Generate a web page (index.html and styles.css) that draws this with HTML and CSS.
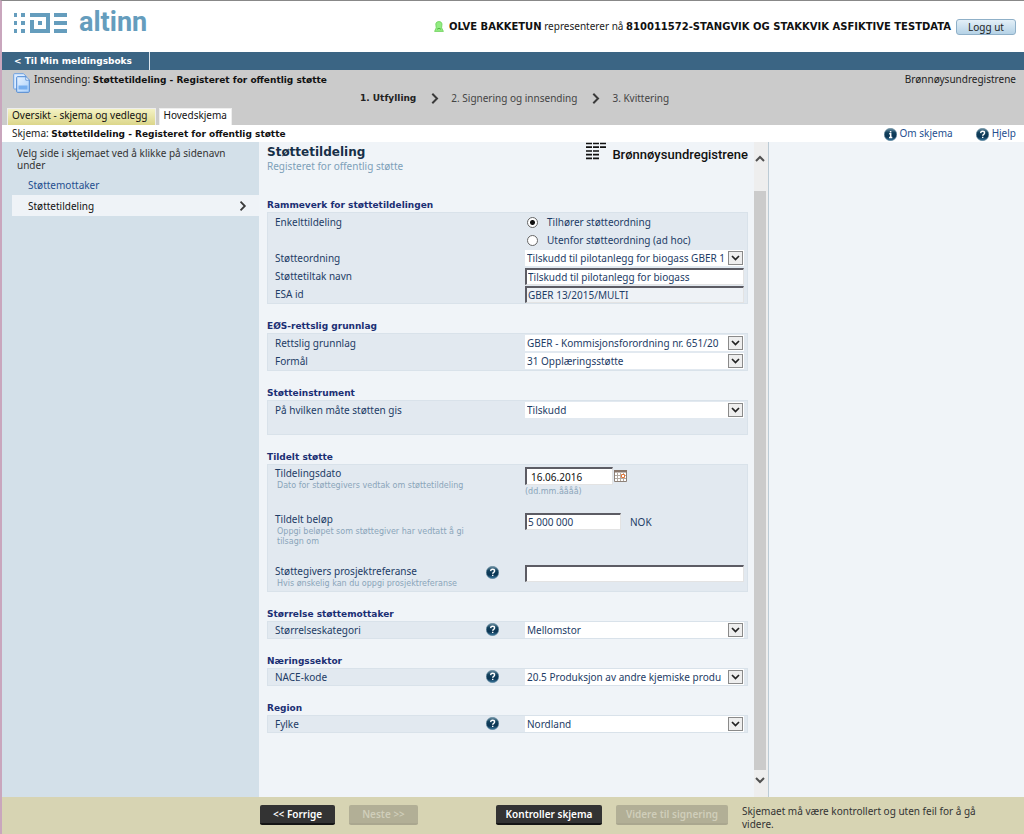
FILE: index.html
```html
<!DOCTYPE html>
<html lang="no">
<head>
<meta charset="utf-8">
<title>Altinn - Støttetildeling</title>
<link rel="stylesheet" href="styles.css">
</head>
<body>
<svg class="defs" aria-hidden="true">
  <defs>
    <linearGradient id="orb" x1="0" y1="0" x2="0" y2="1"><stop offset="0" stop-color="#6f93a6"/><stop offset=".35" stop-color="#12405c"/><stop offset=".7" stop-color="#0b3554"/><stop offset="1" stop-color="#3f7fa5"/></linearGradient>
    <linearGradient id="sheet" x1="0" y1="0" x2="1" y2="1"><stop offset="0" stop-color="#e8f3ff"/><stop offset="1" stop-color="#a9d0fb"/></linearGradient>
    <symbol id="help" viewBox="0 0 13 13"><circle cx="6.5" cy="6.5" r="6.2" fill="url(#orb)" stroke="#5e8398" stroke-width=".6"/><path d="M4.6 5.1C4.7 3.9 5.5 3.3 6.6 3.3c1.200 0 2 .6 2 1.600 0 1.500-1.900 1.500-1.900 2.900M6.700 8.700v1.300" fill="none" stroke="#fff" stroke-width="1.400"/></symbol>
    <symbol id="info" viewBox="0 0 13 13"><circle cx="6.5" cy="6.5" r="6.2" fill="url(#orb)" stroke="#5e8398" stroke-width=".6"/><path d="M6.600 2.900v1.500M5.200 5.800h1.500v3.700M5 9.600h3.300" fill="none" stroke="#fff" stroke-width="1.500"/></symbol>
    <symbol id="drop" viewBox="0 0 15 14"><rect x=".5" y=".5" width="14" height="13" fill="#eee" stroke="#8a8a8a"/><path d="M4 5l3.500 3.500L11 5" fill="none" stroke="#222" stroke-width="1.700"/></symbol>
    <symbol id="next" viewBox="0 0 8 11"><path d="M1.300.8L6 5.500 1.300 10.200" fill="none" stroke="#3a3a3a" stroke-width="2"/></symbol>
  </defs>
</svg>
<div class="page">
  <header class="top">
    <div class="logo">
      <svg width="54" height="21" viewBox="0 0 54 21" fill="#659dbd" aria-hidden="true">
        <path d="M1 1h3v4H1zM8 1h4v4H8zM1 9h3v4H1zM8 9h4v4H8zM1 17h3v4H1zM8 17h4v4H8zM17 1h20v16h-4V5H17zM17 8h4v9h16v4H17zM25 9h4v4h-4zM41 1h13v4H41zM41 9h13v4H41zM41 17h13v4H41z"/>
      </svg>
      <span class="logo-text">altinn</span>
    </div>
    <div class="user">
      <svg width="10" height="11" viewBox="0 0 10 11" aria-hidden="true"><path d="M.6 10.400L2.200 6.800 1.800 3C2 1.300 3.300.6 5 .6s2.800.8 3 2.500L7.600 6.800l1.800 3.600z" fill="#93ec83" stroke="#68cf55" stroke-width=".8"/><path d="M3 8.500c1-1.500 3-1.500 4 0" fill="none" stroke="#56b845"/></svg>
      <span><b>OLVE BAKKETUN</b> representerer nå <b>810011572-STANGVIK OG STAKKVIK ASFIKTIVE TESTDATA</b></span>
      <button class="logout" type="button">Logg ut</button>
    </div>
  </header>
  <nav class="bar"><a href="#">&lt; Til Min meldingsboks</a></nav>
  <div class="task">
    <div class="task-head">
      <svg width="17" height="20" viewBox="0 0 17 20" aria-hidden="true"><path d="M.7 1.500q0-.8.8-.8h9l3 3V16H1.500q-.8 0-.8-.8z" fill="#dcecff" stroke="#6b9fe0"/><path d="M3.700 4.500q0-.8.8-.8h8.500l3.300 3.300v11.500q0 .8-.8.8h-11q-.8 0-.8-.8z" fill="url(#sheet)" stroke="#4b87d3"/><path d="M12.800 4v3.200h3.300" fill="#fff" stroke="#4b87d3" stroke-width=".8"/><path d="M5.500 12.500h9v4h-9z" fill="#76aff0"/></svg>
      <span class="task-title">Innsending: <b>Støttetildeling - Registeret for offentlig støtte</b></span>
      <span class="org">Brønnøysundregistrene</span>
    </div>
    <ol class="steps">
      <li class="current">1. Utfylling</li>
      <li><svg width="8" height="11"><use href="#next"/></svg>2. Signering og innsending</li>
      <li><svg width="8" height="11"><use href="#next"/></svg>3. Kvittering</li>
    </ol>
    <nav class="tabs">
      <a class="tab overview" href="#">Oversikt - skjema og vedlegg</a>
      <a class="tab active" href="#">Hovedskjema</a>
    </nav>
  </div>
  <div class="formbar">
    <span>Skjema: <b>Støttetildeling - Registeret for offentlig støtte</b></span>
    <nav class="links">
      <a href="#"><svg width="13" height="13"><use href="#info"/></svg><span>Om skjema</span></a>
      <a href="#"><svg width="13" height="13"><use href="#help"/></svg><span>Hjelp</span></a>
    </nav>
  </div>
  <div class="main">
    <aside class="side">
      <p>Velg side i skjemaet ved å klikke på sidenavn under</p>
      <a class="side-link" href="#">Støttemottaker</a>
      <a class="side-link selected" href="#">Støttetildeling <svg width="8" height="10" viewBox="0 0 8 11"><use href="#next"/></svg></a>
    </aside>
    <form class="form">
      <div class="form-head">
        <div class="form-title">
          <h1>Støttetildeling</h1>
          <p>Registeret for offentlig støtte</p>
        </div>
        <div class="brreg">
          <svg width="21" height="18" viewBox="0 0 21 18" aria-hidden="true"><path d="M0 1.500h6M7 1.500h6M14 1.500h6M0 5.200h6M7 5.200h6M14 5.200h6M0 9h6M7 9h6M0 12.700h6M7 12.700h6M0 16.400h6M7 16.400h6" stroke="#111" stroke-width="1.700"/></svg>
          <span>Brønnøysundregistrene</span>
        </div>
      </div>

      <section>
        <h2>Rammeverk for støttetildelingen</h2>
        <div class="box">
          <div class="row" role="radiogroup" aria-labelledby="enk">
            <span class="name" id="enk">Enkelttildeling</span>
            <div class="field radios">
              <label><input type="radio" name="type" checked>Tilhører støtteordning</label>
              <label><input type="radio" name="type">Utenfor støtteordning (ad hoc)</label>
            </div>
          </div>
          <div class="row"><label class="name" for="ordning">Støtteordning</label><div class="field pick"><select id="ordning"><option>Tilskudd til pilotanlegg for biogass GBER 1</option></select><svg width="15" height="14"><use href="#drop"/></svg></div></div>
          <div class="row"><label class="name" for="tiltak">Støttetiltak navn</label><div class="field"><input class="text" id="tiltak" type="text" value="Tilskudd til pilotanlegg for biogass"></div></div>
          <div class="row"><label class="name" for="esa">ESA id</label><div class="field"><input class="text locked" id="esa" type="text" value="GBER 13/2015/MULTI" readonly></div></div>
        </div>
      </section>

      <section>
        <h2>EØS-rettslig grunnlag</h2>
        <div class="box">
          <div class="row"><label class="name" for="rett">Rettslig grunnlag</label><div class="field pick"><select id="rett"><option>GBER - Kommisjonsforordning nr. 651/20</option></select><svg width="15" height="14"><use href="#drop"/></svg></div></div>
          <div class="row"><label class="name" for="formal">Formål</label><div class="field pick"><select id="formal"><option>31 Opplæringsstøtte</option></select><svg width="15" height="14"><use href="#drop"/></svg></div></div>
        </div>
      </section>

      <section>
        <h2>Støtteinstrument</h2>
        <div class="box roomy">
          <div class="row"><label class="name" for="mate">På hvilken måte støtten gis</label><div class="field pick"><select id="mate"><option>Tilskudd</option></select><svg width="15" height="14"><use href="#drop"/></svg></div></div>
        </div>
      </section>

      <section>
        <h2>Tildelt støtte</h2>
        <div class="box amounts">
          <div class="row">
            <div class="name"><label for="dato">Tildelingsdato</label><small>Dato for støttegivers vedtak om støttetildeling</small></div>
            <div class="field">
              <div class="inline"><input class="text date" id="dato" type="text" value="16.06.2016">
              <svg width="13" height="12" viewBox="0 0 13 12" aria-hidden="true"><path d="M.5.5h12v11H.5z" fill="#fff" stroke="#8d8178"/><path d="M0 0h13v2.500H0z" fill="#87756a"/><path d="M1 5.500h11M1 8.500h11M3.500 3v8M6.500 3v8M9.500 3v8" stroke="#b3aaa2"/><path d="M7.500 4.500h3v3h-3z" fill="#fff" stroke="#e0763a"/></svg></div>
              <small class="hint">(dd.mm.åååå)</small>
            </div>
          </div>
          <div class="row">
            <div class="name"><label for="belop">Tildelt beløp</label><small>Oppgi beløpet som støttegiver har vedtatt å gi tilsagn om</small></div>
            <div class="field"><div class="inline"><input class="text amount" id="belop" type="text" value="5 000 000"><span class="unit">NOK</span></div></div>
          </div>
          <div class="row">
            <div class="name"><label for="ref">Støttegivers prosjektreferanse</label><small>Hvis ønskelig kan du oppgi prosjektreferanse</small></div>
            <button class="q" type="button" aria-label="Hjelp"><svg width="13" height="13"><use href="#help"/></svg></button>
            <div class="field"><input class="text" id="ref" type="text"></div>
          </div>
        </div>
      </section>

      <section>
        <h2>Størrelse støttemottaker</h2>
        <div class="box flush">
          <div class="row"><label class="name" for="kat">Størrelseskategori</label><button class="q" type="button" aria-label="Hjelp"><svg width="13" height="13"><use href="#help"/></svg></button><div class="field pick"><select id="kat"><option>Mellomstor</option></select><svg width="15" height="14"><use href="#drop"/></svg></div></div>
        </div>
      </section>

      <section>
        <h2>Næringssektor</h2>
        <div class="box flush">
          <div class="row"><label class="name" for="nace">NACE-kode</label><button class="q" type="button" aria-label="Hjelp"><svg width="13" height="13"><use href="#help"/></svg></button><div class="field pick"><select id="nace"><option>20.5 Produksjon av andre kjemiske produ</option></select><svg width="15" height="14"><use href="#drop"/></svg></div></div>
        </div>
      </section>

      <section>
        <h2>Region</h2>
        <div class="box flush">
          <div class="row"><label class="name" for="fylke">Fylke</label><button class="q" type="button" aria-label="Hjelp"><svg width="13" height="13"><use href="#help"/></svg></button><div class="field pick"><select id="fylke"><option>Nordland</option></select><svg width="15" height="14"><use href="#drop"/></svg></div></div>
        </div>
      </section>
    </form>
    <div class="scroll" aria-hidden="true">
      <svg width="10" height="7" viewBox="0 0 10 7"><path d="M1 6l4-4 4 4" fill="none" stroke="#505050" stroke-width="2"/></svg>
      <div class="thumb"></div>
      <svg width="10" height="7" viewBox="0 0 10 7"><path d="M1 1l4 4 4-4" fill="none" stroke="#505050" stroke-width="2"/></svg>
    </div>
    <div class="rest"></div>
  </div>
  <footer class="foot">
    <button type="button">&lt;&lt; Forrige</button>
    <button type="button" disabled>Neste &gt;&gt;</button>
    <button class="check" type="button">Kontroller skjema</button>
    <button type="button" disabled>Videre til signering</button>
    <p>Skjemaet må være kontrollert og uten feil for å gå videre.</p>
  </footer>
</div>
</body>
</html>
```
FILE: styles.css
```css
* { box-sizing: border-box; }
body, h1, h2, p, ol { margin: 0; padding: 0; }
body {
  font: 10px/12px "Noto Sans", "DejaVu Sans", sans-serif;
  color: #222;
  background: #f0f4f8;
}
b, h1, h2, .current, .bar a { font-family: "DejaVu Sans", sans-serif; font-weight: bold; }
b, h2, .current, .bar a { font-size: 9px; }
b { color: #111; }
a { color: #1f4f8f; text-decoration: none; }
button, input, select { font: inherit; }
svg { display: block; flex: none; }
.defs { position: absolute; width: 0; height: 0; }

.page {
  min-height: 100vh;
  display: flex;
  flex-direction: column;
  border-top: 1px solid #888;
  border-left: 2px solid #c9a6bd;
}

.top {
  height: 51px;
  display: flex;
  justify-content: space-between;
  padding: 8px 8px 0 11px;
  background: #fff;
}
.logo { display: flex; align-items: center; gap: 12px; height: 27px; }
.logo-text {
  font: bold 27px/27px Roboto, sans-serif;
  color: #659dbd;
}
.user { display: flex; align-items: center; gap: 5px; height: 35px; }
.user b { font-size: 10px; }
.logout {
  height: 16px;
  width: 60px;
  padding: 0;
  border: 1px solid #8fb0c8;
  border-radius: 3px;
  background: linear-gradient(#e4f0f8, #b5d2e6);
  color: #222;
}

.bar { display: flex; height: 18px; background: #3b6584; }
.bar a {
  line-height: 18px;
  padding: 0 17px 0 12px;
  border-right: 1px solid #dce6ee;
  color: #fff;
}

.task { background: #cbcbcb; }
.task-head {
  display: flex;
  height: 20px;
  padding: 3px 8px 0 11px;
  gap: 4px;
}
.org { margin-left: auto; }
.steps {
  display: flex;
  height: 18px;
  align-items: center;
  gap: 15px;
  padding: 0 0 2px 358px;
  list-style: none;
  color: #444;
}
.steps li { display: flex; align-items: center; gap: 12px; }
.steps .current { color: #222; }
.tabs { display: flex; gap: 3px; padding-left: 5px; }
.tab {
  height: 17px;
  line-height: 13px;
  padding: 0 4px;
  border: 1px solid #eee;
  border-bottom: 0;
  color: #111;
}
.overview { padding-right: 7px; background: linear-gradient(#f4f2c4, #dcd68a); }
.active { background: #fff; }

.formbar {
  display: flex;
  justify-content: space-between;
  height: 17px;
  padding: 2px 8px 0 10px;
  background: #fff;
}
.links { display: flex; gap: 23px; }
.links a { display: flex; gap: 3px; }
.links svg { margin-top: 1px; }

.main {
  flex: 1;
  display: grid;
  grid-template-columns: 257px 495px 14px minmax(0, 1fr);
}
.side { background: #d3e0e9; }
.side p { padding: 5px 20px 3px 15px; color: #333; }
.side-link {
  display: flex;
  align-items: center;
  justify-content: space-between;
  height: 21px;
  margin-left: 10px;
  padding: 0 12px 0 16px;
}
.selected { background: #eff3f7; color: #111; }

.form { padding: 0 6px 0 8px; color: #1d3c66; }
.form-head {
  display: flex;
  justify-content: space-between;
  height: 56px;
}
.form-title { padding-top: 2px; }
h1 { font-size: 12px; line-height: 16px; color: #173048; }
.form-head p { color: #7da0b8; }
.brreg { display: flex; gap: 5px; height: 18px; }
.brreg span { font: 500 13px/26px Roboto, sans-serif; color: #111; }
section { margin-bottom: 15px; }
h2 { line-height: 14px; color: #1b2f74; }
.box {
  padding: 1px 4px 1px 8px;
  background: #e2e9f0;
  box-shadow: inset 0 0 0 1px #d9e2ea;
}
.roomy { padding-bottom: 16px; }
.flush { padding-top: 0; padding-bottom: 0; }
.row {
  display: grid;
  grid-template-columns: minmax(0, 1fr) 39px 219px;
  min-height: 18px;
}
.name { grid-column: 1; line-height: 18px; }
.q { grid-column: 2; padding: 2px 0 0; border: 0; background: none; height: 15px; width: 13px; }
.field { grid-column: 3; padding-top: 1px; }
.radios { padding: 0; }
.radios label { display: flex; align-items: center; gap: 9px; height: 18px; }
.radios input {
  appearance: none;
  width: 11px;
  height: 11px;
  margin: 0 0 0 2px;
  border: 1px solid #666;
  border-radius: 50%;
  background: #fff;
}
.radios input:checked { background: radial-gradient(#111 0 2px, #fff 3px); }
.pick { position: relative; }
.pick select {
  display: block;
  appearance: none;
  width: 100%;
  height: 16px;
  padding: 0 16px 0 2px;
  border: 0;
  border-radius: 0;
  background: #fff;
  color: #1d3c66;
  line-height: 16px;
}
.pick svg { position: absolute; right: 1px; top: 2px; }
.text {
  display: block;
  width: 100%;
  height: 17px;
  padding: 0 1px;
  border: 1px solid #e3e3e3;
  border-top: 2px solid #5c5c64;
  border-left: 2px solid #5c5c64;
  background: #fff;
  color: #1d3c66;
  line-height: 14px;
}
.locked { background: #eef2f6; }
.amounts { padding-top: 0; padding-bottom: 0; }
.amounts .row:nth-child(1) { height: 48px; padding-top: 2px; }
.amounts .row:nth-child(2) { height: 52px; }
.amounts .row:nth-child(3) { height: 28px; }
.amounts .name { padding-right: 12px; }
.amounts label { display: block; line-height: 15px; }
.inline { display: flex; align-items: center; }
.date { width: 88px; height: 18px; padding-left: 4px; color: #111; }
.inline svg { margin-left: 1px; }
.amount { width: 96px; }
.unit { margin-left: 9px; }
small {
  display: block;
  padding-left: 2px;
  font: 8px/10px "DejaVu Sans", sans-serif;
  color: #8aa5ba;
}
.hint { padding: 2px 0 0; }

.scroll {
  display: flex;
  flex-direction: column;
  align-items: center;
  padding: 13px 2px 13px 0;
  background: #eee;
}
.thumb { flex: 1; width: 12px; margin: 29px 0 7px; background: #cbcbcb; }
.rest { border-left: 1px solid #bccbd5; }

.foot {
  display: grid;
  grid-template-columns: 75px 69px 170px 112px minmax(0, 240px);
  gap: 14px;
  align-items: start;
  height: 37px;
  padding: 8px 8px 0 258px;
  background: #d7d4b3;
}
.foot button {
  height: 20px;
  padding: 0;
  border: 0;
  border-bottom: 2px solid #151515;
  border-radius: 2px;
  background: #333;
  color: #fff;
  font-weight: 600;
  white-space: nowrap;
}
.foot .check { margin-left: 64px; }
.foot button:disabled { background: #b2af96; border-color: #aaa78f; color: #d0ceba; }
.foot p { line-height: 13px; color: #333; }
```
